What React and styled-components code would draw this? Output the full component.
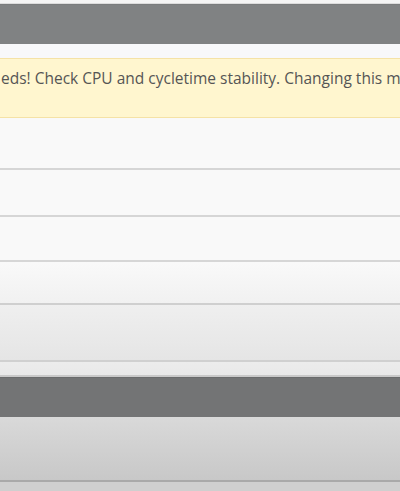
import React from 'react';
import styled, { createGlobalStyle } from 'styled-components';

const GlobalStyle = createGlobalStyle`
  html, body {
    margin: 0;
    padding: 0;
    background: #f8f8f8;
    font-family: "Open Sans", "Liberation Sans", sans-serif;
  }
`;

const Page = styled.div`
  width: 400px;
  height: 491px;
  overflow: hidden;
  display: flex;
  flex-direction: column;

  & > * {
    flex-shrink: 0;
  }
`;

const TopStrip = styled.div`
  height: 3px;
  background: #f4f4f4;
  border-bottom: 1px solid #dcdcdc;
`;

const HeaderBar = styled.div`
  height: 39px;
  background: ${p => p.$dark ? '#737475' : '#808283'};
  border-top: 1px solid ${p => p.$dark ? '#6a6b6c' : '#7a7c7d'};
`;

const Gap = styled.div`
  height: 14px;
  background: #f8f8fa;
`;

const Notice = styled.div`
  height: 60px;
  box-sizing: border-box;
  background: #fff6cf;
  border-top: 1px solid #f5e2a6;
  border-bottom: 1px solid #f5e2a6;
  padding: 9px 0 0 1px;
  color: #555555;
  font-size: 15.5px;
  line-height: 20px;
  white-space: nowrap;
  overflow: hidden;
`;

const Row = styled.div`
  height: ${p => p.$h}px;
  box-sizing: border-box;
  background: linear-gradient(to bottom, ${p => p.$from}, ${p => p.$to});
  border-bottom: ${p => p.$line ? `2px solid ${p.$line}` : 'none'};
`;

const rows = [
  { h: 52, from: '#f9f9f9', to: '#f9f9f9', line: '#d6d6d6' },
  { h: 47, from: '#f9f9f9', to: '#f9f9f9', line: '#d6d6d6' },
  { h: 45, from: '#f9f9f9', to: '#f9f9f9', line: '#d6d6d6' },
  { h: 43, from: '#f9f9f9', to: '#f1f1f1', line: '#cfcfcf' },
  { h: 57, from: '#efefef', to: '#e5e5e5', line: '#d0d0d0' },
  { h: 15, from: '#ececec', to: '#e9e9e9', line: '#c9c9c9' },
];

export default function App() {
  return (
    <Page>
      <GlobalStyle />
      <TopStrip />
      <HeaderBar />
      <Gap />
      <Notice>
        eds! Check CPU and cycletime stability. Changing this m
      </Notice>
      {rows.map((r, i) => (
        <Row key={i} $h={r.h} $from={r.from} $to={r.to} $line={r.line} />
      ))}
      <HeaderBar $dark />
      <Row $h={65} $from="#d9d9d9" $to="#c8c8c8" $line="#a9a9a9" />
      <Row $h={12} $from="#cfcfcf" $to="#cfcfcf" />
    </Page>
  );
}
